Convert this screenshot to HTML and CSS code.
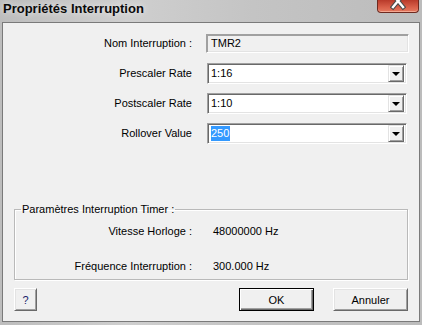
FILE: index.html
```html
<!DOCTYPE html>
<html lang="fr">
<head>
<meta charset="utf-8">
<title>Propriétés Interruption</title>
<link rel="stylesheet" href="styles.css">
</head>
<body>
<div class="window">
  <div class="titlebar">
    <span class="title">Propriétés Interruption</span>
    <div class="close">
      <svg class="close-x" width="16" height="14" viewBox="0 0 16 14">
        <path d="M3 -2 L13 10 M13 -2 L3 10" stroke="#4a4a4a" stroke-width="4.5" stroke-linecap="square"/>
        <path d="M3 -2 L13 10 M13 -2 L3 10" stroke="#ffffff" stroke-width="2.4" stroke-linecap="square"/>
      </svg>
    </div>
  </div>
  <div class="client">
    <div class="form">
      <label class="lbl">Nom Interruption :</label>
      <div class="edit readonly">TMR2</div>

      <label class="lbl">Prescaler Rate</label>
      <div class="combo"><span class="combo-text">1:16</span><span class="drop"><span class="arrow"></span></span></div>

      <label class="lbl">Postscaler Rate</label>
      <div class="combo"><span class="combo-text">1:10</span><span class="drop"><span class="arrow"></span></span></div>

      <label class="lbl">Rollover Value</label>
      <div class="combo"><span class="combo-text"><span class="sel">250</span></span><span class="drop"><span class="arrow"></span></span></div>
    </div>

    <fieldset class="group">
      <legend class="legend">Paramètres Interruption Timer :</legend>
      <div class="info">
        <span class="info-lbl">Vitesse Horloge :</span>
        <span class="info-val">48000000 Hz</span>
        <span class="info-lbl">Fréquence Interruption :</span>
        <span class="info-val">300.000 Hz</span>
      </div>
    </fieldset>

    <div class="buttons">
      <button class="btn btn-help">?</button>
      <span class="spacer"></span>
      <button class="btn btn-wide btn-default">OK</button>
      <button class="btn btn-wide">Annuler</button>
    </div>
  </div>
</div>
</body>
</html>
```
FILE: styles.css
```css
* { box-sizing: border-box; }
html, body {
  margin: 0;
  padding: 0;
}
body {
  width: 422px;
  height: 325px;
  overflow: hidden;
  font-family: "Liberation Sans", Arial, sans-serif;
  font-size: 11px;
  color: #000;
}
.window {
  width: 422px;
  height: 325px;
  background: linear-gradient(90deg, #bdbdbd 0%, #cfcfcf 30%, #c4c4c4 60%, #bcbcbc 100%);
  display: flex;
  flex-direction: column;
}
.titlebar {
  height: 22px;
  display: flex;
  align-items: flex-start;
  padding-left: 3px;
}
.title {
  font-weight: bold;
  font-size: 13px;
  line-height: 18px;
  color: #0a0a0a;
  text-shadow: 0 0 6px rgba(255,255,255,0.8);
}
.close {
  margin-left: auto;
  margin-right: 3px;
  width: 42px;
  height: 13px;
  border: 1px solid #6e2a20;
  border-top: none;
  border-radius: 0 0 4px 4px;
  background: linear-gradient(#b83a2a, #d9604a 60%, #e47a60);
  box-shadow: inset 0 -1px 0 rgba(255,200,180,0.6);
  display: flex;
  justify-content: center;
  overflow: hidden;
}
.close-x {
  display: block;
  margin-top: -3px;
}
.client {
  margin: 0 2px 3px 2px;
  flex: 1;
  background: #f0f0f0;
  border: 1px solid #7a7a7a;
  display: flex;
  flex-direction: column;
}
.form {
  padding-top: 5px;
  display: grid;
  grid-template-columns: 189px 203px;
  grid-auto-rows: 30px;
  column-gap: 14px;
  align-items: center;
}
.lbl {
  text-align: right;
  white-space: nowrap;
}
.edit {
  height: 19px;
  border: 1px solid;
  border-color: #a0a0a0 #ffffff #ffffff #a0a0a0;
  box-shadow: inset 1px 1px 0 #696969, inset -1px -1px 0 #e3e3e3;
  padding: 0 4px;
  line-height: 17px;
  white-space: nowrap;
}
.readonly {
  background: #f0f0f0;
  border-color: #a0a0a0 #ffffff #ffffff #a0a0a0;
  box-shadow: inset 1px 1px 0 #a0a0a0, inset -1px -1px 0 #e3e3e3;
}
.combo {
  width: 200px;
  height: 21px;
  margin-left: 1px;
  background: #fff;
  border: 1px solid;
  border-color: #a0a0a0 #ffffff #ffffff #a0a0a0;
  box-shadow: inset 1px 1px 0 #696969, inset -1px -1px 0 #e3e3e3;
  padding: 1px 2px 2px 2px;
  display: flex;
  align-items: stretch;
}
.combo-text {
  flex: 1;
  padding-left: 1px;
  line-height: 17px;
  white-space: nowrap;
}
.sel {
  background: #3399ff;
  color: #fff;
  display: inline-block;
  line-height: 15px;
  margin-top: 1px;
  padding-right: 1px;
}
.drop {
  width: 16px;
  height: 17px;
  margin-top: 0;
  background: #f0f0f0;
  border: 1px solid;
  border-color: #e3e3e3 #696969 #696969 #e3e3e3;
  box-shadow: inset 1px 1px 0 #ffffff, inset -1px -1px 0 #a0a0a0;
  display: flex;
  align-items: center;
  justify-content: center;
}
.arrow {
  width: 0;
  height: 0;
  border-left: 4px solid transparent;
  border-right: 4px solid transparent;
  border-top: 4px solid #000;
  margin-top: 1px;
}
.group {
  margin: 55px 0 0 11px;
  width: 394px;
  height: 77px;
  padding: 0 0 0 6px;
  border: 1px solid #b9b9b9;
  box-shadow: inset 1px 1px 0 #ffffff, 1px 1px 0 #ffffff;
  min-width: 0;
}
.legend {
  padding: 0 1px;
  line-height: 13px;
  white-space: nowrap;
}
.info {
  margin-left: -6px;
  padding-top: 7px;
  display: grid;
  grid-template-columns: 177px auto;
  grid-template-rows: 16px 16px;
  row-gap: 19px;
  column-gap: 21px;
  align-items: center;
}
.info-lbl {
  text-align: right;
  white-space: nowrap;
}
.info-val {
  white-space: nowrap;
}
.buttons {
  margin-top: 8px;
  padding: 0 11px 0 11px;
  display: flex;
  gap: 19px;
}
.spacer {
  flex: 1;
}
.btn {
  height: 23px;
  font-family: "Liberation Sans", Arial, sans-serif;
  font-size: 11px;
  color: #000;
  background: #f0f0f0;
  border: 1px solid;
  border-color: #ffffff #696969 #696969 #ffffff;
  box-shadow: inset 1px 1px 0 #e3e3e3, inset -1px -1px 0 #a0a0a0;
  padding: 0;
  margin: 0;
}
.btn-help {
  width: 23px;
  color: #1b1b6b;
}
.btn-wide {
  width: 75px;
}
.btn-default {
  border: 1px solid #000;
  box-shadow: inset 1px 1px 0 #ffffff, inset -1px -1px 0 #696969, inset -2px -2px 0 #a0a0a0;
}
```
